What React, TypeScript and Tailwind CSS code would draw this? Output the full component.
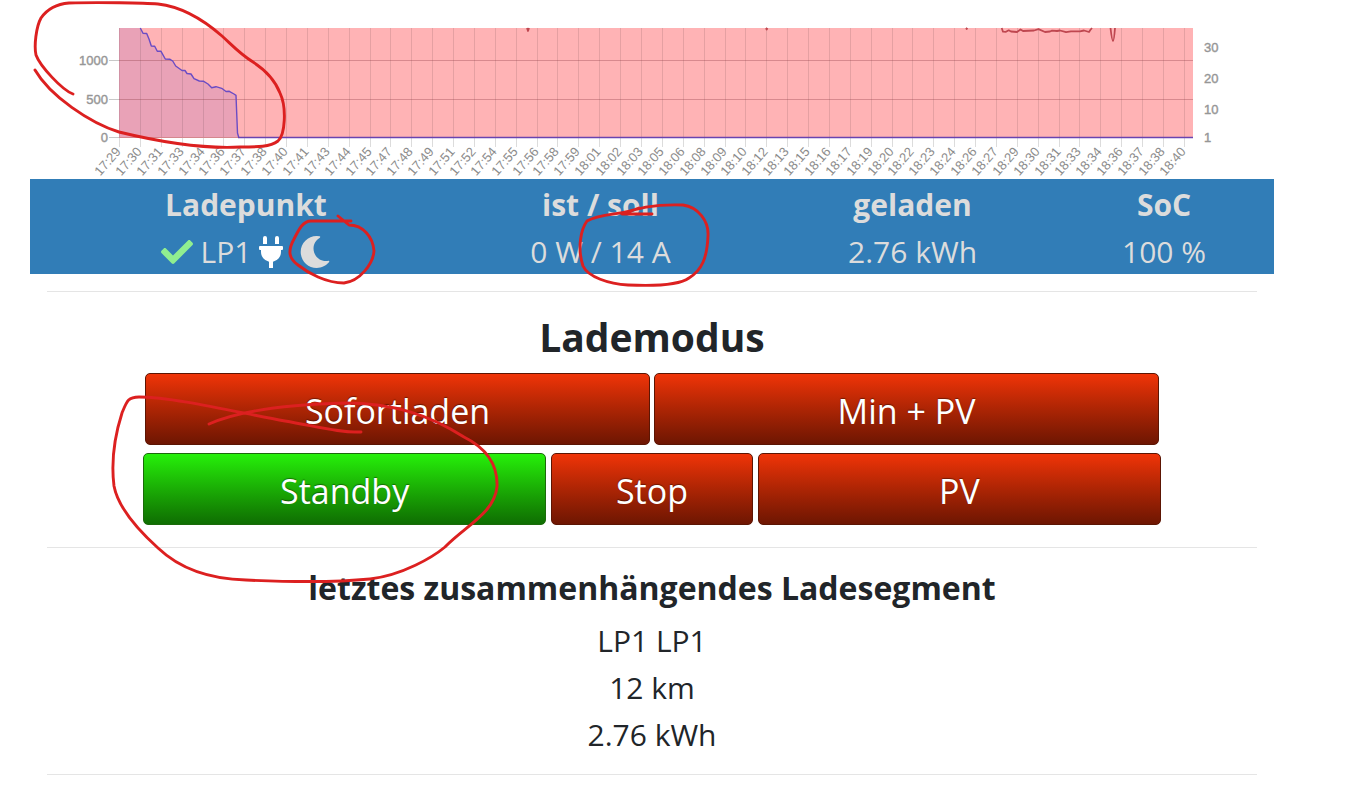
import { FaCheck, FaMoon, FaPlug } from "react-icons/fa"

const timeLabels = [
  "17:29", "17:30", "17:31", "17:33", "17:34", "17:36", "17:37", "17:38", "17:40", "17:41", "17:43", "17:44", "17:45",
  "17:47", "17:48", "17:49", "17:51", "17:52", "17:54", "17:55", "17:56", "17:58", "17:59", "18:01", "18:02", "18:03",
  "18:05", "18:06", "18:08", "18:09", "18:10", "18:12", "18:13", "18:15", "18:16", "18:17", "18:19", "18:20", "18:22",
  "18:23", "18:24", "18:26", "18:27", "18:29", "18:30", "18:31", "18:33", "18:34", "18:36", "18:37", "18:38", "18:40",
]

const powerTicks = [
  { label: "1000", y: 60 },
  { label: "500", y: 99 },
  { label: "0", y: 137 },
]

const socTicks = [
  { label: "30", y: 47 },
  { label: "20", y: 78 },
  { label: "10", y: 109 },
  { label: "1", y: 137 },
]

const powerLine =
  "M140.3 28L143 33.3L146.7 33.5L149 39L151.3 46L154.7 46.3L157.3 51.3L161 51.3L165.3 59L170 59.3L172.7 61L175.7 66L182 70.5L185 70.5L187 73.5L191 74L194 78.7L199.3 81L203.3 81.2L208 84L211.7 87.7L216 86.7L221.7 88.3L226 91.5L229.3 91.3L234 94L236 95.3L236.7 113L237.5 133L238.7 137.3"

const socLine =
  "M1001.7 28L1003 31.7L1006 31.8L1008.7 30.3L1011 31.5L1017 32L1020.5 29.5L1023 31L1034 30.5L1038.5 29.2L1045 32L1050 31.5L1052 30.7L1057 31L1060 30.5L1066 32.2L1071 31.3L1080 31.3L1084 30.5L1089 32L1090.3 30L1092 28"

const segments = ["LP1 LP1", "12 km", "2.76 kWh"]

const modeButton =
  "h-[72px] rounded-[5px] border pt-1 text-center text-[34px] leading-[40px] text-white [text-shadow:0_-1px_1px_rgba(0,0,0,0.4)]"
const redButton = "border-[#5c1503] bg-linear-to-b from-[#f03408] to-[#6e1602]"
const greenButton = "border-[#1b6a0a] bg-linear-to-b from-[#26f00a] to-[#0f6e02]"

function PowerChart() {
  return (
    <svg viewBox="0 0 1349 179" className="block w-full" role="img" aria-label="Ladeleistung">
      <rect x="119" y="28" width="1074" height="110" fill="#ffb3b5" />
      <path d={`${powerLine}H119V28Z`} fill="#e9a2b7" />
      {timeLabels.map((label, i) => {
        const x = Math.round(119 + i * 20.88) + 0.5
        return (
          <g key={label}>
            <path d={`M${x} 28V137`} stroke="#000" strokeOpacity="0.1" />
            <path d={`M${x} 138V147`} stroke="#dcdcdc" />
            <text
              transform={`translate(${x + 2} 152) rotate(-49)`}
              textAnchor="end"
              fontSize="13"
              fill="#8c8c8c"
              fontFamily="Liberation Sans, Arial, sans-serif"
            >
              {label}
            </text>
          </g>
        )
      })}
      {powerTicks.map((tick) => (
        <g key={tick.label}>
          <path d={`M109 ${tick.y + 0.5}H119`} stroke="#c8c8c8" />
          <path d={`M119 ${tick.y + 0.5}H1193`} stroke="#8e3c46" strokeOpacity="0.35" />
          <text
            x="108"
            y={tick.y + 5}
            textAnchor="end"
            fontSize="13"
            fill="#969696"
            stroke="#969696"
            strokeWidth="0.4"
            fontFamily="Liberation Sans, Arial, sans-serif"
          >
            {tick.label}
          </text>
        </g>
      ))}
      {socTicks.map((tick) => (
        <text
          key={tick.label}
          x="1204"
          y={tick.y + 5}
          fontSize="13"
          fill="#969696"
          stroke="#969696"
          strokeWidth="0.4"
          fontFamily="Liberation Sans, Arial, sans-serif"
        >
          {tick.label}
        </text>
      ))}
      <path d={powerLine} fill="none" stroke="#6a4cc4" strokeWidth="1.4" strokeLinejoin="round" />
      <path d="M238 137.5H1193" stroke="#6a44b0" strokeWidth="1.3" />
      <g fill="none" stroke="#bf4750" strokeWidth="1.8" strokeLinejoin="round">
        <path d="M527 28l1 3 1-3M766 28l0.7 1.5 0.7-1.5M966 28l0.7 1 0.7-1" />
        <path d={socLine} />
        <path d="M1110.5 28q1.5 13 2.5 13q1 0 2-13" />
      </g>
    </svg>
  )
}

// Handwritten red marker strokes lying over the page
function MarkerStrokes() {
  return (
    <svg
      viewBox="0 0 1349 790"
      className="pointer-events-none absolute left-0 top-0 w-full"
      fill="none"
      stroke="#dc2020"
      strokeWidth="2.9"
      strokeLinecap="round"
      strokeLinejoin="round"
      aria-hidden="true"
    >
      <path d="M73 94C62 90 40 66 36 55C34 46 36 27 41 18C48 8 57 4 69 3C98 2 145 3 158 4C185 7 206 22 222 36C233 46 240 54 253 62C267 71 275 80 280 93C287 108 285 135 278 141C270 147 258 147 240 147C202 149 160 142 119 132C90 123 50 96 35 70" />
      <path d="M351 221H311C303 221 299 229 294 239C288 250 288 258 298 265C308 273 326 283 344 283C360 281 373 264 374 251C373 237 363 225 349 225L338 216" />
      <path d="M652 214H622C636 208 655 204 683 205C698 207 709 221 708 236C707 258 702 270 689 278C678 286 650 286 628 285C609 284 588 277 583 266C577 248 581 229 587 221C600 213 625 215 639 208" />
      <path d="M361 432C340 433 315 426 285 421C240 413 175 397 139 397C128 397 127 401 122 413C115 435 111 462 114 486C118 507 137 529 158 548C179 568 207 579 246 580C290 582 340 582 370 579C403 575 433 557 445 547C467 525 494 513 497 487C498 465 486 448 464 437C431 416 395 403 345 403C305 404 245 408 209 424" />
    </svg>
  )
}

export default function App() {
  return (
    <div className="relative min-h-screen overflow-hidden bg-white font-['Open_Sans','Noto_Sans',sans-serif] text-[#212529]">
      <PowerChart />

      <main className="pl-[30px] pr-[75px] text-center">
        <div className="bg-[#317db7] px-4">
          <table className="w-full table-fixed text-[#dcdcdc]">
            <thead>
              <tr className="h-12 text-[30px] leading-[44px]">
                <th className="w-[33%] pt-1">Ladepunkt</th>
                <th className="w-[25.5%] pt-1">ist / soll</th>
                <th className="w-[26%] pt-1">geladen</th>
                <th className="w-[15.5%] pt-1">SoC</th>
              </tr>
            </thead>
            <tbody>
              <tr className="h-[47px] text-[30px] leading-[44px]">
                <td className="pt-[2px]">
                  <span className="flex items-center justify-center gap-2">
                    <FaCheck className="size-8 text-[#90ee90]" />
                    LP1
                    <FaPlug className="h-8 w-6 text-white" />
                    <FaMoon className="ml-2 size-8" />
                  </span>
                </td>
                <td className="pt-[2px]">0 W / 14 A</td>
                <td className="pt-[2px]">2.76 kWh</td>
                <td className="pt-[2px]">100 %</td>
              </tr>
            </tbody>
          </table>
        </div>

        <div className="px-[17px]">
          <hr className="mt-[17px] border-[#e5e5e5]" />

          <section className="px-24 pt-5">
            <h1 className="text-[39px] font-bold leading-[50px]">Lademodus</h1>
            <div className="mt-[11px] grid grid-cols-2 gap-1 px-[2px]">
              <button type="button" className={`${modeButton} ${redButton}`}>Sofortladen</button>
              <button type="button" className={`${modeButton} ${redButton}`}>Min + PV</button>
            </div>
            <div className="mt-2 grid grid-cols-[2fr_1fr_2fr] gap-[5px]">
              <button type="button" className={`${modeButton} ${greenButton}`}>Standby</button>
              <button type="button" className={`${modeButton} ${redButton}`}>Stop</button>
              <button type="button" className={`${modeButton} ${redButton}`}>PV</button>
            </div>
          </section>

          <hr className="mt-[22px] border-[#e5e5e5]" />

          <section className="pt-4">
            <h2 className="text-[32px] font-bold leading-[47px]">letztes zusammenhängendes Ladesegment</h2>
            <div className="mt-[6px]">
              {segments.map((segment) => (
                <p key={segment} className="text-[30px] leading-[47px]">{segment}</p>
              ))}
            </div>
          </section>

          <hr className="mt-4 border-[#e5e5e5]" />
        </div>
      </main>

      <MarkerStrokes />
    </div>
  )
}
